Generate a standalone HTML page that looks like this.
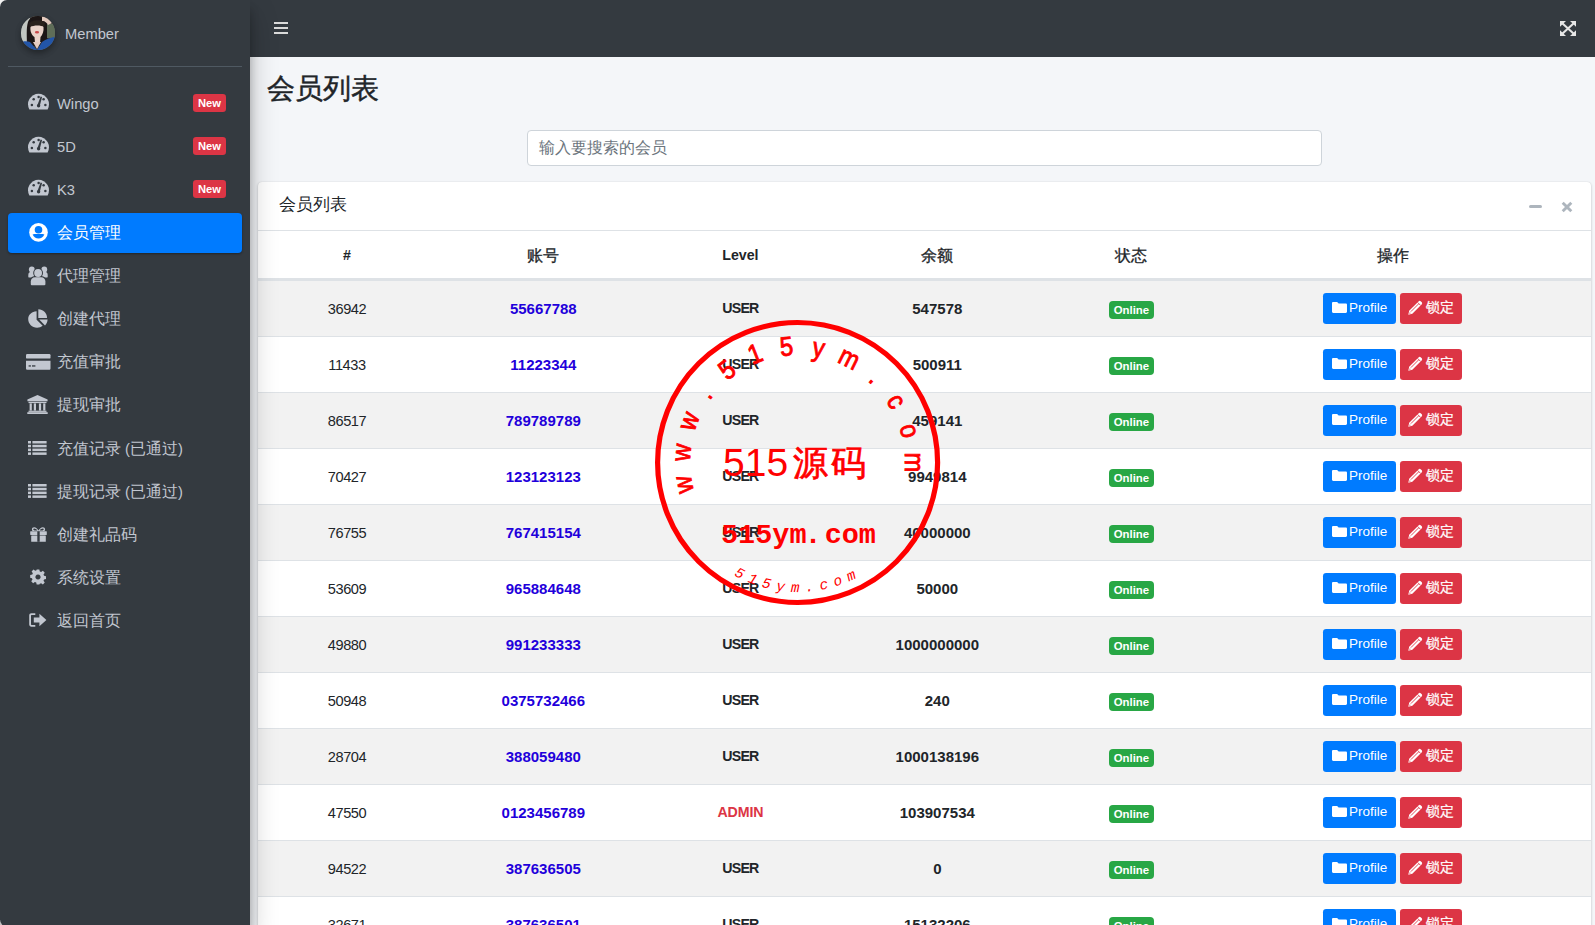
<!DOCTYPE html>
<html><head><meta charset="utf-8"><title>会员列表</title>
<style>
*{box-sizing:border-box;margin:0;padding:0}
html,body{width:1595px;height:925px;overflow:hidden;background:#f4f6f9;font-family:"Liberation Sans",sans-serif;color:#212529}
.a{position:absolute}
#corner{position:absolute;left:0;top:0;width:20px;height:20px;background:#f8f8f8;z-index:1}
#sidebar{position:absolute;left:0;top:0;width:250px;height:927px;border-bottom-left-radius:7.5px;background:#343a40;box-shadow:0 14px 28px rgba(0,0,0,.25),0 10px 10px rgba(0,0,0,.22);z-index:10;border-top-left-radius:7px}
#navbar{position:absolute;left:250px;top:0;width:1345px;height:57px;background:#343a40;z-index:2}
.nl{position:absolute;left:8px;width:234px;height:40px;border-radius:4px;color:#c2c7d0;font-size:14.7px;line-height:40px;white-space:nowrap}
.nl.act{background:#007bff;color:#fff;box-shadow:0 1px 3px rgba(0,0,0,.12),0 1px 2px rgba(0,0,0,.24)}
.nl .ic{position:absolute;line-height:0}
.nl .tx{position:absolute;left:49px;top:0.9px}
.cj{font-size:16px}
.badge{position:absolute;left:185px;top:11px;width:33px;height:18px;background:#dc3545;border-radius:3.2px;color:#fff;font-weight:700;font-size:11.2px;line-height:18px;text-align:center}
.row{position:absolute;left:258px;width:1333px;height:56px;border-top:1px solid #dee2e6}
.row.s{background:#f2f2f2}
.c{position:absolute;top:0.2px;width:200px;text-align:center;line-height:55px;white-space:nowrap}
.btn{position:absolute;height:31px;border-radius:3.2px;color:#fff;font-size:13.5px;line-height:31px}
</style></head><body>
<div id="corner"></div><div id="corner2" style="position:absolute;left:0;top:905px;width:20px;height:20px;background:#f8f8f8;z-index:1"></div>
<div id="sidebar">
  <div class="a" style="left:21px;top:16px;width:33.6px;height:33.6px;border-radius:50%;overflow:hidden;background:#6b6e6a;box-shadow:0 3px 6px rgba(0,0,0,.16),0 3px 6px rgba(0,0,0,.23)">
    <svg width="34" height="34" viewBox="0 0 34 34"><defs><filter id="bl" x="-10%" y="-10%" width="120%" height="120%"><feGaussianBlur stdDeviation="0.7"/></filter></defs><g filter="url(#bl)"><rect x="-2" y="-2" width="38" height="38" fill="#3a3634"/><rect x="-2" y="-2" width="11" height="32" fill="#c2c6c1"/><path d="M7 6C9 1 14-1 19 0s8 3 8 8l-1 22H6C6 22 5 12 7 6z" fill="#1f1917"/><rect x="26" y="8" width="10" height="14" fill="#5e6d58"/><path d="M21 1c3-1 8 1 10 6l-4 2c-1-2-3-4-6-4z" fill="#e3c9bd"/><path d="M9.5 11c0.5-3 3-5 6.5-5s6 2 6.5 5c0.5 4-1 8-3 10l-0.5 6c-1 1-4 1-5 0l-0.5-6C10.5 19 9 15 9.5 11z" fill="#ead3c9"/><path d="M8 7c3-3 11-4 16-1l-1 5c-3-2-10-2-14 0z" fill="#2a201d"/><ellipse cx="16" cy="16.2" rx="2.1" ry="1.2" fill="#c9484a"/><path d="M-2 27c4-2 8-2 11-1l7 8 5-8c4-3 9-5 15-5v15H-2z" fill="#2455a8"/><path d="M12 26l4 7 4-7z" fill="#e6cdc2"/></g></svg>
  </div>
  <div class="a" style="left:65px;top:22.8px;font-size:14.7px;line-height:22px;color:#c2c7d0">Member</div>
  <div class="a" style="left:8px;top:66px;width:234px;height:1px;background:#4f5962"></div>
<div class="nl" style="top:83px"><span class="ic" style="left:19.8px;top:10.4px"><svg width="21" height="17" viewBox="0 0 21 17"><path fill="#c2c7d0" d="M1.4 16.6A10.5 10.5 0 1 1 19.6 16.6Z"/><g fill="#343a40"><circle cx="10.6" cy="3.9" r="1.25"/><circle cx="5.7" cy="6.2" r="1.25"/><circle cx="15.6" cy="6.2" r="1.25"/><circle cx="3.9" cy="11.9" r="1.25"/><circle cx="17.4" cy="11.9" r="1.25"/><circle cx="10.6" cy="12.8" r="1.7"/><path d="M12.6 3.6l1.5 0.5-2.4 9-2.4-0.6z"/></g></svg></span><span class="tx">Wingo</span><span class=badge>New</span></div>
<div class="nl" style="top:126px"><span class="ic" style="left:19.8px;top:10.4px"><svg width="21" height="17" viewBox="0 0 21 17"><path fill="#c2c7d0" d="M1.4 16.6A10.5 10.5 0 1 1 19.6 16.6Z"/><g fill="#343a40"><circle cx="10.6" cy="3.9" r="1.25"/><circle cx="5.7" cy="6.2" r="1.25"/><circle cx="15.6" cy="6.2" r="1.25"/><circle cx="3.9" cy="11.9" r="1.25"/><circle cx="17.4" cy="11.9" r="1.25"/><circle cx="10.6" cy="12.8" r="1.7"/><path d="M12.6 3.6l1.5 0.5-2.4 9-2.4-0.6z"/></g></svg></span><span class="tx">5D</span><span class=badge>New</span></div>
<div class="nl" style="top:169px"><span class="ic" style="left:19.8px;top:10.4px"><svg width="21" height="17" viewBox="0 0 21 17"><path fill="#c2c7d0" d="M1.4 16.6A10.5 10.5 0 1 1 19.6 16.6Z"/><g fill="#343a40"><circle cx="10.6" cy="3.9" r="1.25"/><circle cx="5.7" cy="6.2" r="1.25"/><circle cx="15.6" cy="6.2" r="1.25"/><circle cx="3.9" cy="11.9" r="1.25"/><circle cx="17.4" cy="11.9" r="1.25"/><circle cx="10.6" cy="12.8" r="1.7"/><path d="M12.6 3.6l1.5 0.5-2.4 9-2.4-0.6z"/></g></svg></span><span class="tx">K3</span><span class=badge>New</span></div>
<div class="nl act" style="top:212.6px"><span class="ic" style="left:20.7px;top:10.7px"><svg width="19" height="19" viewBox="0 0 19 19"><circle cx="9.5" cy="9.4" r="9.3" fill="#fff"/><circle cx="9.5" cy="6.7" r="3.8" fill="#007bff"/><path fill="#007bff" d="M3.6 11.6c0.6-0.3 1.2-0.5 1.9-0.5h8c0.7 0 1.3 0.2 1.9 0.5-1.3 2.5-3.2 3.9-5.9 3.9s-4.6-1.4-5.9-3.9z"/></svg></span><span class="tx"><span class="cj">会员管理</span></span></div>
<div class="nl" style="top:255px"><span class="ic" style="left:20.3px;top:10.9px"><svg width="20" height="20" viewBox="0 0 20 20"><g fill="#c2c7d0"><circle cx="3.8" cy="3.4" r="2.9"/><circle cx="16.3" cy="3.4" r="2.9"/><path d="M0.3 9c0-2 1.3-3.2 3.2-3.2h2.6v5.6H0.8C0.5 11.4 0.3 11.1 0.3 10.8z"/><path d="M19.7 9c0-2-1.3-3.2-3.2-3.2h-2.6v5.6h5.3c0.3 0 0.5-0.3 0.5-0.6z"/></g><circle cx="10.1" cy="7" r="4.9" fill="#343a40"/><path d="M1.7 20v-4.5c0-3.2 2.3-5.2 5.2-5.2h6.4c2.9 0 5.2 2 5.2 5.2V20z" fill="#343a40"/><circle cx="10.1" cy="7" r="3.9" fill="#c2c7d0"/><path fill="#c2c7d0" d="M2.8 18.3v-2.8c0-2.6 1.8-4.2 4.2-4.2h6.2c2.4 0 4.2 1.6 4.2 4.2v2.8c0 0.5-0.4 0.9-0.9 0.9H3.7c-0.5 0-0.9-0.4-0.9-0.9z"/></svg></span><span class="tx"><span class="cj">代理管理</span></span></div>
<div class="nl" style="top:298px"><span class="ic" style="left:20px;top:10.5px"><svg width="20" height="19" viewBox="0 0 20 19"><g fill="#c2c7d0"><path d="M8.6 2.2v8.5l6.1 6.1c-1.5 1.3-3.5 2-5.6 2C4.1 18.8 0.2 14.9 0.2 10.1c0-4.5 3.5-7.5 8.4-7.9z"/><path d="M10.3 0.2c4.9 0.2 8.6 3.8 8.8 8.8h-8.8z"/><path d="M11.2 10.6h8.4c-0.1 2.3-1.1 4.3-2.6 5.9z"/></g></svg></span><span class="tx"><span class="cj">创建代理</span></span></div>
<div class="nl" style="top:341px"><span class="ic" style="left:17.8px;top:12.9px"><svg width="25" height="16" viewBox="0 0 25 16"><g fill="#c2c7d0"><rect x="0" y="0" width="24.5" height="4.6" rx="1.2"/><path d="M0 6.7h24.5v7.8c0 0.8-0.6 1.3-1.3 1.3H1.3C0.6 15.8 0 15.3 0 14.5z"/></g><g fill="#343a40"><rect x="2.6" y="11.3" width="2.3" height="1.3"/><rect x="6" y="11.3" width="3.4" height="1.3"/></g></svg></span><span class="tx"><span class="cj">充值审批</span></span></div>
<div class="nl" style="top:384px"><span class="ic" style="left:19.1px;top:11.1px"><svg width="21" height="19" viewBox="0 0 21 19"><g fill="#c2c7d0"><path d="M10.5 0L0.4 4.5v1.7h20.2V4.5z"/><rect x="1.5" y="6.8" width="18" height="1.3"/><rect x="2.6" y="8.4" width="2.2" height="7.2"/><rect x="6.8" y="8.4" width="2.2" height="7.2"/><rect x="11.9" y="8.4" width="2.2" height="7.2"/><rect x="16.2" y="8.4" width="2.2" height="7.2"/><rect x="1.5" y="15.7" width="18" height="1.2"/><rect x="0.3" y="17.2" width="20.4" height="1.8"/></g></svg></span><span class="tx"><span class="cj">提现审批</span></span></div>
<div class="nl" style="top:428px"><span class="ic" style="left:20.4px;top:12.7px"><svg width="19" height="14" viewBox="0 0 19 14"><g fill="#c2c7d0"><rect x="0" y="0" width="3" height="2.5"/><rect x="4.4" y="0" width="14.2" height="2.5"/><rect x="0" y="3.8" width="3" height="2.5"/><rect x="4.4" y="3.8" width="14.2" height="2.5"/><rect x="0" y="7.6" width="3" height="2.5"/><rect x="4.4" y="7.6" width="14.2" height="2.5"/><rect x="0" y="11.4" width="3" height="2.5"/><rect x="4.4" y="11.4" width="14.2" height="2.5"/></g></svg></span><span class="tx"><span class="cj">充值记录</span> (<span class="cj">已通过</span>)</span></div>
<div class="nl" style="top:471px"><span class="ic" style="left:20.4px;top:12.7px"><svg width="19" height="14" viewBox="0 0 19 14"><g fill="#c2c7d0"><rect x="0" y="0" width="3" height="2.5"/><rect x="4.4" y="0" width="14.2" height="2.5"/><rect x="0" y="3.8" width="3" height="2.5"/><rect x="4.4" y="3.8" width="14.2" height="2.5"/><rect x="0" y="7.6" width="3" height="2.5"/><rect x="4.4" y="7.6" width="14.2" height="2.5"/><rect x="0" y="11.4" width="3" height="2.5"/><rect x="4.4" y="11.4" width="14.2" height="2.5"/></g></svg></span><span class="tx"><span class="cj">提现记录</span> (<span class="cj">已通过</span>)</span></div>
<div class="nl" style="top:514px"><span class="ic" style="left:21.5px;top:13.1px"><svg width="17" height="15" viewBox="0 0 17 15"><g fill="#c2c7d0"><path d="M4.2 0.3c1.7 0 3.2 1.5 4.3 3.3 1.1-1.8 2.6-3.3 4.3-3.3 1.4 0 2.3 0.9 2.3 2 0 0.6-0.2 1.2-0.6 1.6H2.5C2.1 3.5 1.9 2.9 1.9 2.3c0-1.1 0.9-2 2.3-2zm0 1.3c-0.6 0-0.9 0.3-0.9 0.7 0 0.6 0.6 1.1 1.2 1.1h2.8C6.5 2.4 5.3 1.6 4.2 1.6zm8.6 0c-1.1 0-2.3 0.8-3.1 1.8h2.8c0.6 0 1.2-0.5 1.2-1.1 0-0.4-0.3-0.7-0.9-0.7z"/><rect x="0.2" y="4.3" width="16.6" height="3.6" rx="0.4"/><rect x="1.2" y="8.6" width="14.6" height="6.2" rx="0.4"/></g><rect x="7.3" y="4.3" width="2.4" height="10.5" fill="#343a40"/><rect x="7.7" y="4.3" width="1.6" height="10.5" fill="#c2c7d0" opacity="0"/></svg></span><span class="tx"><span class="cj">创建礼品码</span></span></div>
<div class="nl" style="top:557px"><span class="ic" style="left:21.8px;top:11.8px"><svg width="16" height="16" viewBox="-0.5 -0.5 18 18"><path fill="#c2c7d0" fill-rule="evenodd" d="M7 0h3l0.5 2.4 1.5 0.6 2-1.4 2.1 2.1-1.4 2 0.6 1.5 2.4 0.5v3l-2.4 0.5-0.6 1.5 1.4 2-2.1 2.1-2-1.4-1.5 0.6L10 17H7l-0.5-2.4-1.5-0.6-2 1.4-2.1-2.1 1.4-2L1.7 9.8-0.3 9.3v-3l2.4-0.5 0.6-1.5-1.4-2 2.1-2.1 2 1.4 1.5-0.6zM8.5 5.6a2.9 2.9 0 1 0 0.01 0z"/></svg></span><span class="tx"><span class="cj">系统设置</span></span></div>
<div class="nl" style="top:600px"><span class="ic" style="left:21px;top:13.4px"><svg width="18" height="14" viewBox="0 0 18 14"><g fill="#c2c7d0"><path d="M6.3 0.3H2.4C1.1 0.3 0.2 1.2 0.2 2.4v9.2c0 1.2 0.9 2.1 2.2 2.1h3.9v-1.8H2.6c-0.4 0-0.6-0.2-0.6-0.6V2.7c0-0.4 0.2-0.6 0.6-0.6h3.7z"/><path d="M10.4 0.8l7 6.2-7 6.2V9.5H4.8V4.5h5.6z"/></g></svg></span><span class="tx"><span class="cj">返回首页</span></span></div>
</div>
<div id="navbar">
  <div class="a" style="left:23.6px;top:21.75px;width:14.6px;height:13px">
    <div class="a" style="left:0;top:0;width:14.6px;height:2.5px;background:#dadada"></div>
    <div class="a" style="left:0;top:5px;width:14.6px;height:2.5px;background:#dadada"></div>
    <div class="a" style="left:0;top:10px;width:14.6px;height:2.5px;background:#dadada"></div>
  </div>
  <svg class="a" style="left:1310px;top:20.5px" width="16" height="15" viewBox="0 0 16 15"><g fill="#e6e6e6"><path d="M0 0h6L0 5.8z"/><path d="M16 0h-6l6 5.8z"/><path d="M0 15h6L0 9.2z"/><path d="M16 15h-6l6-5.8z"/></g><path d="M2 2L14 13M14 2L2 13" stroke="#e6e6e6" stroke-width="2.1"/></svg>
</div>
<div class="a" style="left:267px;top:67.5px;font-size:28.2px;-webkit-text-stroke:0.45px #212529;line-height:40px;color:#212529">会员列表</div>
<div class="a" style="left:527px;top:130px;width:795px;height:36px;background:#fff;border:1px solid #ced4da;border-radius:4px"></div>
<div class="a" style="left:539px;top:136px;font-size:15.7px;line-height:24px;color:#6c757d">输入要搜索的会员</div>
<div class="a" style="left:258px;top:182px;width:1333px;height:760px;background:#fff;border-radius:4px;box-shadow:0 0 1px rgba(0,0,0,.125),0 1px 3px rgba(0,0,0,.2)"></div>
<div class="a" style="left:278.6px;top:190.8px;font-size:17.4px;line-height:26px">会员列表</div>
<div class="a" style="left:1528.5px;top:205px;width:13px;height:3px;border-radius:1.5px;background:#adb5bd"></div>
<svg class="a" style="left:1561px;top:201px" width="12" height="12" viewBox="0 0 12 12"><path d="M1.7 1.7l8.6 8.6M10.3 1.7l-8.6 8.6" stroke="#adb5bd" stroke-width="2.9"/></svg>
<div class="a" style="left:258px;top:230px;width:1333px;height:1px;background:#dee2e6"></div>
<div class="a" style="left:258px;top:231px;width:1333px;height:49px;border-bottom:2px solid #dee2e6"><div class="c" style="left:-11px;line-height:49.6px;font-weight:700;font-size:14.2px">#</div><div class="c" style="left:185.29999999999995px;line-height:49.6px;font-weight:700;font-size:14.2px"><span class="cj" style="font-weight:400;-webkit-text-stroke:0.3px #212529">账号</span></div><div class="c" style="left:382.4px;line-height:49.6px;font-weight:700;font-size:14.2px">Level</div><div class="c" style="left:579.3px;line-height:49.6px;font-weight:700;font-size:14.2px"><span class="cj" style="font-weight:400;-webkit-text-stroke:0.3px #212529">余额</span></div><div class="c" style="left:773.3px;line-height:49.6px;font-weight:700;font-size:14.2px"><span class="cj" style="font-weight:400;-webkit-text-stroke:0.3px #212529">状态</span></div><div class="c" style="left:1035px;line-height:49.6px;font-weight:700;font-size:14.2px"><span class="cj" style="font-weight:400;-webkit-text-stroke:0.3px #212529">操作</span></div></div>
<div class="row s" style="top:280px"><div class="c" style="left:-11px;top:0.9px;font-size:14.6px;letter-spacing:-0.4px">36942</div><div class="c" style="left:185.29999999999995px;font-size:15px;font-weight:700;color:#1f00db">55667788</div><div class="c" style="left:382.4px;font-size:14.2px;letter-spacing:-0.75px;font-weight:700;">USER</div><div class="c" style="left:579.3px;font-size:15px;font-weight:700">547578</div><div class="a" style="left:850.7px;top:19.6px;width:45.4px;height:18px;background:#28a745;border-radius:4px;color:#fff;font-weight:700;font-size:11.4px;line-height:18px;text-align:center">Online</div><div class="btn" style="left:1065px;top:11.5px;width:73px;background:#007bff"><svg class="a" style="left:9px;top:9px" width="15" height="11" viewBox="0 0 14 11" preserveAspectRatio="none"><path fill="#fff" d="M0 1.2C0 0.5 0.5 0 1.2 0h3.6l1.4 1.6h6.6c0.7 0 1.2 0.5 1.2 1.2v7c0 0.7-0.5 1.2-1.2 1.2H1.2C0.5 11 0 10.5 0 9.8z"/></svg><span class="a" style="left:26px;top:-0.5px">Profile</span></div><div class="btn" style="left:1142.2px;top:11.5px;width:61.6px;background:#dc3545"><svg class="a" style="left:7.5px;top:7.5px" width="15" height="15" viewBox="0 0 15 15"><path fill="#fff" d="M0.3 14.7L1.2 10.7 10.5 1.4a1.7 1.7 0 0 1 2.4 0l0.7 0.7a1.7 1.7 0 0 1 0 2.4L4.3 13.8z"/><path d="M2.9 11.6L10.6 3.9M9.6 2.4L12.6 5.4" stroke="#dc3545" stroke-width="0.9"/><circle cx="1.9" cy="13.1" r="0.6" fill="#dc3545"/></svg><span class="a cj" style="left:26px;top:-0.5px;font-size:14px;-webkit-text-stroke:0.25px #fff">锁定</span></div></div>
<div class="row" style="top:336px"><div class="c" style="left:-11px;top:0.9px;font-size:14.6px;letter-spacing:-0.4px">11433</div><div class="c" style="left:185.29999999999995px;font-size:15px;font-weight:700;color:#1f00db">11223344</div><div class="c" style="left:382.4px;font-size:14.2px;letter-spacing:-0.75px;font-weight:700;">USER</div><div class="c" style="left:579.3px;font-size:15px;font-weight:700">500911</div><div class="a" style="left:850.7px;top:19.6px;width:45.4px;height:18px;background:#28a745;border-radius:4px;color:#fff;font-weight:700;font-size:11.4px;line-height:18px;text-align:center">Online</div><div class="btn" style="left:1065px;top:11.5px;width:73px;background:#007bff"><svg class="a" style="left:9px;top:9px" width="15" height="11" viewBox="0 0 14 11" preserveAspectRatio="none"><path fill="#fff" d="M0 1.2C0 0.5 0.5 0 1.2 0h3.6l1.4 1.6h6.6c0.7 0 1.2 0.5 1.2 1.2v7c0 0.7-0.5 1.2-1.2 1.2H1.2C0.5 11 0 10.5 0 9.8z"/></svg><span class="a" style="left:26px;top:-0.5px">Profile</span></div><div class="btn" style="left:1142.2px;top:11.5px;width:61.6px;background:#dc3545"><svg class="a" style="left:7.5px;top:7.5px" width="15" height="15" viewBox="0 0 15 15"><path fill="#fff" d="M0.3 14.7L1.2 10.7 10.5 1.4a1.7 1.7 0 0 1 2.4 0l0.7 0.7a1.7 1.7 0 0 1 0 2.4L4.3 13.8z"/><path d="M2.9 11.6L10.6 3.9M9.6 2.4L12.6 5.4" stroke="#dc3545" stroke-width="0.9"/><circle cx="1.9" cy="13.1" r="0.6" fill="#dc3545"/></svg><span class="a cj" style="left:26px;top:-0.5px;font-size:14px;-webkit-text-stroke:0.25px #fff">锁定</span></div></div>
<div class="row s" style="top:392px"><div class="c" style="left:-11px;top:0.9px;font-size:14.6px;letter-spacing:-0.4px">86517</div><div class="c" style="left:185.29999999999995px;font-size:15px;font-weight:700;color:#1f00db">789789789</div><div class="c" style="left:382.4px;font-size:14.2px;letter-spacing:-0.75px;font-weight:700;">USER</div><div class="c" style="left:579.3px;font-size:15px;font-weight:700">459141</div><div class="a" style="left:850.7px;top:19.6px;width:45.4px;height:18px;background:#28a745;border-radius:4px;color:#fff;font-weight:700;font-size:11.4px;line-height:18px;text-align:center">Online</div><div class="btn" style="left:1065px;top:11.5px;width:73px;background:#007bff"><svg class="a" style="left:9px;top:9px" width="15" height="11" viewBox="0 0 14 11" preserveAspectRatio="none"><path fill="#fff" d="M0 1.2C0 0.5 0.5 0 1.2 0h3.6l1.4 1.6h6.6c0.7 0 1.2 0.5 1.2 1.2v7c0 0.7-0.5 1.2-1.2 1.2H1.2C0.5 11 0 10.5 0 9.8z"/></svg><span class="a" style="left:26px;top:-0.5px">Profile</span></div><div class="btn" style="left:1142.2px;top:11.5px;width:61.6px;background:#dc3545"><svg class="a" style="left:7.5px;top:7.5px" width="15" height="15" viewBox="0 0 15 15"><path fill="#fff" d="M0.3 14.7L1.2 10.7 10.5 1.4a1.7 1.7 0 0 1 2.4 0l0.7 0.7a1.7 1.7 0 0 1 0 2.4L4.3 13.8z"/><path d="M2.9 11.6L10.6 3.9M9.6 2.4L12.6 5.4" stroke="#dc3545" stroke-width="0.9"/><circle cx="1.9" cy="13.1" r="0.6" fill="#dc3545"/></svg><span class="a cj" style="left:26px;top:-0.5px;font-size:14px;-webkit-text-stroke:0.25px #fff">锁定</span></div></div>
<div class="row" style="top:448px"><div class="c" style="left:-11px;top:0.9px;font-size:14.6px;letter-spacing:-0.4px">70427</div><div class="c" style="left:185.29999999999995px;font-size:15px;font-weight:700;color:#1f00db">123123123</div><div class="c" style="left:382.4px;font-size:14.2px;letter-spacing:-0.75px;font-weight:700;">USER</div><div class="c" style="left:579.3px;font-size:15px;font-weight:700">9949814</div><div class="a" style="left:850.7px;top:19.6px;width:45.4px;height:18px;background:#28a745;border-radius:4px;color:#fff;font-weight:700;font-size:11.4px;line-height:18px;text-align:center">Online</div><div class="btn" style="left:1065px;top:11.5px;width:73px;background:#007bff"><svg class="a" style="left:9px;top:9px" width="15" height="11" viewBox="0 0 14 11" preserveAspectRatio="none"><path fill="#fff" d="M0 1.2C0 0.5 0.5 0 1.2 0h3.6l1.4 1.6h6.6c0.7 0 1.2 0.5 1.2 1.2v7c0 0.7-0.5 1.2-1.2 1.2H1.2C0.5 11 0 10.5 0 9.8z"/></svg><span class="a" style="left:26px;top:-0.5px">Profile</span></div><div class="btn" style="left:1142.2px;top:11.5px;width:61.6px;background:#dc3545"><svg class="a" style="left:7.5px;top:7.5px" width="15" height="15" viewBox="0 0 15 15"><path fill="#fff" d="M0.3 14.7L1.2 10.7 10.5 1.4a1.7 1.7 0 0 1 2.4 0l0.7 0.7a1.7 1.7 0 0 1 0 2.4L4.3 13.8z"/><path d="M2.9 11.6L10.6 3.9M9.6 2.4L12.6 5.4" stroke="#dc3545" stroke-width="0.9"/><circle cx="1.9" cy="13.1" r="0.6" fill="#dc3545"/></svg><span class="a cj" style="left:26px;top:-0.5px;font-size:14px;-webkit-text-stroke:0.25px #fff">锁定</span></div></div>
<div class="row s" style="top:504px"><div class="c" style="left:-11px;top:0.9px;font-size:14.6px;letter-spacing:-0.4px">76755</div><div class="c" style="left:185.29999999999995px;font-size:15px;font-weight:700;color:#1f00db">767415154</div><div class="c" style="left:382.4px;font-size:14.2px;letter-spacing:-0.75px;font-weight:700;">USER</div><div class="c" style="left:579.3px;font-size:15px;font-weight:700">40000000</div><div class="a" style="left:850.7px;top:19.6px;width:45.4px;height:18px;background:#28a745;border-radius:4px;color:#fff;font-weight:700;font-size:11.4px;line-height:18px;text-align:center">Online</div><div class="btn" style="left:1065px;top:11.5px;width:73px;background:#007bff"><svg class="a" style="left:9px;top:9px" width="15" height="11" viewBox="0 0 14 11" preserveAspectRatio="none"><path fill="#fff" d="M0 1.2C0 0.5 0.5 0 1.2 0h3.6l1.4 1.6h6.6c0.7 0 1.2 0.5 1.2 1.2v7c0 0.7-0.5 1.2-1.2 1.2H1.2C0.5 11 0 10.5 0 9.8z"/></svg><span class="a" style="left:26px;top:-0.5px">Profile</span></div><div class="btn" style="left:1142.2px;top:11.5px;width:61.6px;background:#dc3545"><svg class="a" style="left:7.5px;top:7.5px" width="15" height="15" viewBox="0 0 15 15"><path fill="#fff" d="M0.3 14.7L1.2 10.7 10.5 1.4a1.7 1.7 0 0 1 2.4 0l0.7 0.7a1.7 1.7 0 0 1 0 2.4L4.3 13.8z"/><path d="M2.9 11.6L10.6 3.9M9.6 2.4L12.6 5.4" stroke="#dc3545" stroke-width="0.9"/><circle cx="1.9" cy="13.1" r="0.6" fill="#dc3545"/></svg><span class="a cj" style="left:26px;top:-0.5px;font-size:14px;-webkit-text-stroke:0.25px #fff">锁定</span></div></div>
<div class="row" style="top:560px"><div class="c" style="left:-11px;top:0.9px;font-size:14.6px;letter-spacing:-0.4px">53609</div><div class="c" style="left:185.29999999999995px;font-size:15px;font-weight:700;color:#1f00db">965884648</div><div class="c" style="left:382.4px;font-size:14.2px;letter-spacing:-0.75px;font-weight:700;">USER</div><div class="c" style="left:579.3px;font-size:15px;font-weight:700">50000</div><div class="a" style="left:850.7px;top:19.6px;width:45.4px;height:18px;background:#28a745;border-radius:4px;color:#fff;font-weight:700;font-size:11.4px;line-height:18px;text-align:center">Online</div><div class="btn" style="left:1065px;top:11.5px;width:73px;background:#007bff"><svg class="a" style="left:9px;top:9px" width="15" height="11" viewBox="0 0 14 11" preserveAspectRatio="none"><path fill="#fff" d="M0 1.2C0 0.5 0.5 0 1.2 0h3.6l1.4 1.6h6.6c0.7 0 1.2 0.5 1.2 1.2v7c0 0.7-0.5 1.2-1.2 1.2H1.2C0.5 11 0 10.5 0 9.8z"/></svg><span class="a" style="left:26px;top:-0.5px">Profile</span></div><div class="btn" style="left:1142.2px;top:11.5px;width:61.6px;background:#dc3545"><svg class="a" style="left:7.5px;top:7.5px" width="15" height="15" viewBox="0 0 15 15"><path fill="#fff" d="M0.3 14.7L1.2 10.7 10.5 1.4a1.7 1.7 0 0 1 2.4 0l0.7 0.7a1.7 1.7 0 0 1 0 2.4L4.3 13.8z"/><path d="M2.9 11.6L10.6 3.9M9.6 2.4L12.6 5.4" stroke="#dc3545" stroke-width="0.9"/><circle cx="1.9" cy="13.1" r="0.6" fill="#dc3545"/></svg><span class="a cj" style="left:26px;top:-0.5px;font-size:14px;-webkit-text-stroke:0.25px #fff">锁定</span></div></div>
<div class="row s" style="top:616px"><div class="c" style="left:-11px;top:0.9px;font-size:14.6px;letter-spacing:-0.4px">49880</div><div class="c" style="left:185.29999999999995px;font-size:15px;font-weight:700;color:#1f00db">991233333</div><div class="c" style="left:382.4px;font-size:14.2px;letter-spacing:-0.75px;font-weight:700;">USER</div><div class="c" style="left:579.3px;font-size:15px;font-weight:700">1000000000</div><div class="a" style="left:850.7px;top:19.6px;width:45.4px;height:18px;background:#28a745;border-radius:4px;color:#fff;font-weight:700;font-size:11.4px;line-height:18px;text-align:center">Online</div><div class="btn" style="left:1065px;top:11.5px;width:73px;background:#007bff"><svg class="a" style="left:9px;top:9px" width="15" height="11" viewBox="0 0 14 11" preserveAspectRatio="none"><path fill="#fff" d="M0 1.2C0 0.5 0.5 0 1.2 0h3.6l1.4 1.6h6.6c0.7 0 1.2 0.5 1.2 1.2v7c0 0.7-0.5 1.2-1.2 1.2H1.2C0.5 11 0 10.5 0 9.8z"/></svg><span class="a" style="left:26px;top:-0.5px">Profile</span></div><div class="btn" style="left:1142.2px;top:11.5px;width:61.6px;background:#dc3545"><svg class="a" style="left:7.5px;top:7.5px" width="15" height="15" viewBox="0 0 15 15"><path fill="#fff" d="M0.3 14.7L1.2 10.7 10.5 1.4a1.7 1.7 0 0 1 2.4 0l0.7 0.7a1.7 1.7 0 0 1 0 2.4L4.3 13.8z"/><path d="M2.9 11.6L10.6 3.9M9.6 2.4L12.6 5.4" stroke="#dc3545" stroke-width="0.9"/><circle cx="1.9" cy="13.1" r="0.6" fill="#dc3545"/></svg><span class="a cj" style="left:26px;top:-0.5px;font-size:14px;-webkit-text-stroke:0.25px #fff">锁定</span></div></div>
<div class="row" style="top:672px"><div class="c" style="left:-11px;top:0.9px;font-size:14.6px;letter-spacing:-0.4px">50948</div><div class="c" style="left:185.29999999999995px;font-size:15px;font-weight:700;color:#1f00db">0375732466</div><div class="c" style="left:382.4px;font-size:14.2px;letter-spacing:-0.75px;font-weight:700;">USER</div><div class="c" style="left:579.3px;font-size:15px;font-weight:700">240</div><div class="a" style="left:850.7px;top:19.6px;width:45.4px;height:18px;background:#28a745;border-radius:4px;color:#fff;font-weight:700;font-size:11.4px;line-height:18px;text-align:center">Online</div><div class="btn" style="left:1065px;top:11.5px;width:73px;background:#007bff"><svg class="a" style="left:9px;top:9px" width="15" height="11" viewBox="0 0 14 11" preserveAspectRatio="none"><path fill="#fff" d="M0 1.2C0 0.5 0.5 0 1.2 0h3.6l1.4 1.6h6.6c0.7 0 1.2 0.5 1.2 1.2v7c0 0.7-0.5 1.2-1.2 1.2H1.2C0.5 11 0 10.5 0 9.8z"/></svg><span class="a" style="left:26px;top:-0.5px">Profile</span></div><div class="btn" style="left:1142.2px;top:11.5px;width:61.6px;background:#dc3545"><svg class="a" style="left:7.5px;top:7.5px" width="15" height="15" viewBox="0 0 15 15"><path fill="#fff" d="M0.3 14.7L1.2 10.7 10.5 1.4a1.7 1.7 0 0 1 2.4 0l0.7 0.7a1.7 1.7 0 0 1 0 2.4L4.3 13.8z"/><path d="M2.9 11.6L10.6 3.9M9.6 2.4L12.6 5.4" stroke="#dc3545" stroke-width="0.9"/><circle cx="1.9" cy="13.1" r="0.6" fill="#dc3545"/></svg><span class="a cj" style="left:26px;top:-0.5px;font-size:14px;-webkit-text-stroke:0.25px #fff">锁定</span></div></div>
<div class="row s" style="top:728px"><div class="c" style="left:-11px;top:0.9px;font-size:14.6px;letter-spacing:-0.4px">28704</div><div class="c" style="left:185.29999999999995px;font-size:15px;font-weight:700;color:#1f00db">388059480</div><div class="c" style="left:382.4px;font-size:14.2px;letter-spacing:-0.75px;font-weight:700;">USER</div><div class="c" style="left:579.3px;font-size:15px;font-weight:700">1000138196</div><div class="a" style="left:850.7px;top:19.6px;width:45.4px;height:18px;background:#28a745;border-radius:4px;color:#fff;font-weight:700;font-size:11.4px;line-height:18px;text-align:center">Online</div><div class="btn" style="left:1065px;top:11.5px;width:73px;background:#007bff"><svg class="a" style="left:9px;top:9px" width="15" height="11" viewBox="0 0 14 11" preserveAspectRatio="none"><path fill="#fff" d="M0 1.2C0 0.5 0.5 0 1.2 0h3.6l1.4 1.6h6.6c0.7 0 1.2 0.5 1.2 1.2v7c0 0.7-0.5 1.2-1.2 1.2H1.2C0.5 11 0 10.5 0 9.8z"/></svg><span class="a" style="left:26px;top:-0.5px">Profile</span></div><div class="btn" style="left:1142.2px;top:11.5px;width:61.6px;background:#dc3545"><svg class="a" style="left:7.5px;top:7.5px" width="15" height="15" viewBox="0 0 15 15"><path fill="#fff" d="M0.3 14.7L1.2 10.7 10.5 1.4a1.7 1.7 0 0 1 2.4 0l0.7 0.7a1.7 1.7 0 0 1 0 2.4L4.3 13.8z"/><path d="M2.9 11.6L10.6 3.9M9.6 2.4L12.6 5.4" stroke="#dc3545" stroke-width="0.9"/><circle cx="1.9" cy="13.1" r="0.6" fill="#dc3545"/></svg><span class="a cj" style="left:26px;top:-0.5px;font-size:14px;-webkit-text-stroke:0.25px #fff">锁定</span></div></div>
<div class="row" style="top:784px"><div class="c" style="left:-11px;top:0.9px;font-size:14.6px;letter-spacing:-0.4px">47550</div><div class="c" style="left:185.29999999999995px;font-size:15px;font-weight:700;color:#1f00db">0123456789</div><div class="c" style="left:382.4px;font-size:14.2px;letter-spacing:-0.75px;font-weight:700;color:#dc3545;letter-spacing:-0.1px">ADMIN</div><div class="c" style="left:579.3px;font-size:15px;font-weight:700">103907534</div><div class="a" style="left:850.7px;top:19.6px;width:45.4px;height:18px;background:#28a745;border-radius:4px;color:#fff;font-weight:700;font-size:11.4px;line-height:18px;text-align:center">Online</div><div class="btn" style="left:1065px;top:11.5px;width:73px;background:#007bff"><svg class="a" style="left:9px;top:9px" width="15" height="11" viewBox="0 0 14 11" preserveAspectRatio="none"><path fill="#fff" d="M0 1.2C0 0.5 0.5 0 1.2 0h3.6l1.4 1.6h6.6c0.7 0 1.2 0.5 1.2 1.2v7c0 0.7-0.5 1.2-1.2 1.2H1.2C0.5 11 0 10.5 0 9.8z"/></svg><span class="a" style="left:26px;top:-0.5px">Profile</span></div><div class="btn" style="left:1142.2px;top:11.5px;width:61.6px;background:#dc3545"><svg class="a" style="left:7.5px;top:7.5px" width="15" height="15" viewBox="0 0 15 15"><path fill="#fff" d="M0.3 14.7L1.2 10.7 10.5 1.4a1.7 1.7 0 0 1 2.4 0l0.7 0.7a1.7 1.7 0 0 1 0 2.4L4.3 13.8z"/><path d="M2.9 11.6L10.6 3.9M9.6 2.4L12.6 5.4" stroke="#dc3545" stroke-width="0.9"/><circle cx="1.9" cy="13.1" r="0.6" fill="#dc3545"/></svg><span class="a cj" style="left:26px;top:-0.5px;font-size:14px;-webkit-text-stroke:0.25px #fff">锁定</span></div></div>
<div class="row s" style="top:840px"><div class="c" style="left:-11px;top:0.9px;font-size:14.6px;letter-spacing:-0.4px">94522</div><div class="c" style="left:185.29999999999995px;font-size:15px;font-weight:700;color:#1f00db">387636505</div><div class="c" style="left:382.4px;font-size:14.2px;letter-spacing:-0.75px;font-weight:700;">USER</div><div class="c" style="left:579.3px;font-size:15px;font-weight:700">0</div><div class="a" style="left:850.7px;top:19.6px;width:45.4px;height:18px;background:#28a745;border-radius:4px;color:#fff;font-weight:700;font-size:11.4px;line-height:18px;text-align:center">Online</div><div class="btn" style="left:1065px;top:11.5px;width:73px;background:#007bff"><svg class="a" style="left:9px;top:9px" width="15" height="11" viewBox="0 0 14 11" preserveAspectRatio="none"><path fill="#fff" d="M0 1.2C0 0.5 0.5 0 1.2 0h3.6l1.4 1.6h6.6c0.7 0 1.2 0.5 1.2 1.2v7c0 0.7-0.5 1.2-1.2 1.2H1.2C0.5 11 0 10.5 0 9.8z"/></svg><span class="a" style="left:26px;top:-0.5px">Profile</span></div><div class="btn" style="left:1142.2px;top:11.5px;width:61.6px;background:#dc3545"><svg class="a" style="left:7.5px;top:7.5px" width="15" height="15" viewBox="0 0 15 15"><path fill="#fff" d="M0.3 14.7L1.2 10.7 10.5 1.4a1.7 1.7 0 0 1 2.4 0l0.7 0.7a1.7 1.7 0 0 1 0 2.4L4.3 13.8z"/><path d="M2.9 11.6L10.6 3.9M9.6 2.4L12.6 5.4" stroke="#dc3545" stroke-width="0.9"/><circle cx="1.9" cy="13.1" r="0.6" fill="#dc3545"/></svg><span class="a cj" style="left:26px;top:-0.5px;font-size:14px;-webkit-text-stroke:0.25px #fff">锁定</span></div></div>
<div class="row" style="top:896px"><div class="c" style="left:-11px;top:0.9px;font-size:14.6px;letter-spacing:-0.4px">32671</div><div class="c" style="left:185.29999999999995px;font-size:15px;font-weight:700;color:#1f00db">387636501</div><div class="c" style="left:382.4px;font-size:14.2px;letter-spacing:-0.75px;font-weight:700;">USER</div><div class="c" style="left:579.3px;font-size:15px;font-weight:700">15132206</div><div class="a" style="left:850.7px;top:19.6px;width:45.4px;height:18px;background:#28a745;border-radius:4px;color:#fff;font-weight:700;font-size:11.4px;line-height:18px;text-align:center">Online</div><div class="btn" style="left:1065px;top:11.5px;width:73px;background:#007bff"><svg class="a" style="left:9px;top:9px" width="15" height="11" viewBox="0 0 14 11" preserveAspectRatio="none"><path fill="#fff" d="M0 1.2C0 0.5 0.5 0 1.2 0h3.6l1.4 1.6h6.6c0.7 0 1.2 0.5 1.2 1.2v7c0 0.7-0.5 1.2-1.2 1.2H1.2C0.5 11 0 10.5 0 9.8z"/></svg><span class="a" style="left:26px;top:-0.5px">Profile</span></div><div class="btn" style="left:1142.2px;top:11.5px;width:61.6px;background:#dc3545"><svg class="a" style="left:7.5px;top:7.5px" width="15" height="15" viewBox="0 0 15 15"><path fill="#fff" d="M0.3 14.7L1.2 10.7 10.5 1.4a1.7 1.7 0 0 1 2.4 0l0.7 0.7a1.7 1.7 0 0 1 0 2.4L4.3 13.8z"/><path d="M2.9 11.6L10.6 3.9M9.6 2.4L12.6 5.4" stroke="#dc3545" stroke-width="0.9"/><circle cx="1.9" cy="13.1" r="0.6" fill="#dc3545"/></svg><span class="a cj" style="left:26px;top:-0.5px;font-size:14px;-webkit-text-stroke:0.25px #fff">锁定</span></div></div>
<svg class="a" style="left:0;top:0;z-index:20;pointer-events:none" width="1595" height="925" viewBox="0 0 1595 925"><circle cx="797.6" cy="462.5" r="140" fill="none" stroke="#ff0000" stroke-width="5.2"/><text transform="translate(797.6 462.5) rotate(-101.00) translate(0 -107.5) scale(0.88 1)" x="0" y="0" text-anchor="middle" font-family="Liberation Sans" font-size="27" fill="#ff0000" stroke="#ff0000" stroke-width="0.9">w</text><text transform="translate(797.6 462.5) rotate(-85.08) translate(0 -107.5) scale(0.88 1)" x="0" y="0" text-anchor="middle" font-family="Liberation Sans" font-size="27" fill="#ff0000" stroke="#ff0000" stroke-width="0.9">w</text><text transform="translate(797.6 462.5) rotate(-69.17) translate(0 -107.5) scale(0.88 1)" x="0" y="0" text-anchor="middle" font-family="Liberation Sans" font-size="27" fill="#ff0000" stroke="#ff0000" stroke-width="0.9">w</text><text transform="translate(797.6 462.5) rotate(-53.25) translate(0 -107.5) scale(0.88 1)" x="0" y="0" text-anchor="middle" font-family="Liberation Sans" font-size="27" fill="#ff0000" stroke="#ff0000" stroke-width="0.9">.</text><text transform="translate(797.6 462.5) rotate(-37.33) translate(0 -107.5) scale(0.88 1)" x="0" y="0" text-anchor="middle" font-family="Liberation Sans" font-size="27" fill="#ff0000" stroke="#ff0000" stroke-width="0.9">5</text><text transform="translate(797.6 462.5) rotate(-21.42) translate(0 -107.5) scale(0.88 1)" x="0" y="0" text-anchor="middle" font-family="Liberation Sans" font-size="27" fill="#ff0000" stroke="#ff0000" stroke-width="0.9">1</text><text transform="translate(797.6 462.5) rotate(-5.50) translate(0 -107.5) scale(0.88 1)" x="0" y="0" text-anchor="middle" font-family="Liberation Sans" font-size="27" fill="#ff0000" stroke="#ff0000" stroke-width="0.9">5</text><text transform="translate(797.6 462.5) rotate(10.42) translate(0 -107.5) scale(0.88 1)" x="0" y="0" text-anchor="middle" font-family="Liberation Sans" font-size="27" fill="#ff0000" stroke="#ff0000" stroke-width="0.9">y</text><text transform="translate(797.6 462.5) rotate(26.33) translate(0 -107.5) scale(0.88 1)" x="0" y="0" text-anchor="middle" font-family="Liberation Sans" font-size="27" fill="#ff0000" stroke="#ff0000" stroke-width="0.9">m</text><text transform="translate(797.6 462.5) rotate(42.25) translate(0 -107.5) scale(0.88 1)" x="0" y="0" text-anchor="middle" font-family="Liberation Sans" font-size="27" fill="#ff0000" stroke="#ff0000" stroke-width="0.9">.</text><text transform="translate(797.6 462.5) rotate(58.17) translate(0 -107.5) scale(0.88 1)" x="0" y="0" text-anchor="middle" font-family="Liberation Sans" font-size="27" fill="#ff0000" stroke="#ff0000" stroke-width="0.9">c</text><text transform="translate(797.6 462.5) rotate(74.08) translate(0 -107.5) scale(0.88 1)" x="0" y="0" text-anchor="middle" font-family="Liberation Sans" font-size="27" fill="#ff0000" stroke="#ff0000" stroke-width="0.9">o</text><text transform="translate(797.6 462.5) rotate(90.00) translate(0 -107.5) scale(0.88 1)" x="0" y="0" text-anchor="middle" font-family="Liberation Sans" font-size="27" fill="#ff0000" stroke="#ff0000" stroke-width="0.9">m</text><text transform="rotate(27.60 797.6 462.5)" x="797.6" y="592.0" text-anchor="middle" font-family="Liberation Mono" font-style="italic" font-size="14.5" fill="#ff0000">5</text><text transform="rotate(20.99 797.6 462.5)" x="797.6" y="592.0" text-anchor="middle" font-family="Liberation Mono" font-style="italic" font-size="14.5" fill="#ff0000">1</text><text transform="rotate(14.38 797.6 462.5)" x="797.6" y="592.0" text-anchor="middle" font-family="Liberation Mono" font-style="italic" font-size="14.5" fill="#ff0000">5</text><text transform="rotate(7.76 797.6 462.5)" x="797.6" y="592.0" text-anchor="middle" font-family="Liberation Mono" font-style="italic" font-size="14.5" fill="#ff0000">y</text><text transform="rotate(1.15 797.6 462.5)" x="797.6" y="592.0" text-anchor="middle" font-family="Liberation Mono" font-style="italic" font-size="14.5" fill="#ff0000">m</text><text transform="rotate(-5.46 797.6 462.5)" x="797.6" y="592.0" text-anchor="middle" font-family="Liberation Mono" font-style="italic" font-size="14.5" fill="#ff0000">.</text><text transform="rotate(-12.08 797.6 462.5)" x="797.6" y="592.0" text-anchor="middle" font-family="Liberation Mono" font-style="italic" font-size="14.5" fill="#ff0000">c</text><text transform="rotate(-18.69 797.6 462.5)" x="797.6" y="592.0" text-anchor="middle" font-family="Liberation Mono" font-style="italic" font-size="14.5" fill="#ff0000">o</text><text transform="rotate(-25.30 797.6 462.5)" x="797.6" y="592.0" text-anchor="middle" font-family="Liberation Mono" font-style="italic" font-size="14.5" fill="#ff0000">m</text><text x="723" y="475.5" font-family="Liberation Sans" font-size="39" fill="#ff0000">515<tspan dx="5" font-size="35" letter-spacing="3" dy="-1" stroke="#ff0000" stroke-width="0.7">源码</tspan></text><text x="721" y="543" font-family="Liberation Mono" font-weight="700" font-size="28.5" fill="#ff0000">515ym<tspan dx="-2">.</tspan><tspan dx="3">com</tspan></text></svg>
</body></html>
